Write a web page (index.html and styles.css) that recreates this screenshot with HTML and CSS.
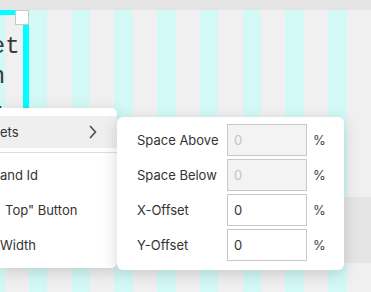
FILE: index.html
```html
<!DOCTYPE html>
<html>
<head>
<meta charset="utf-8">
<link rel="stylesheet" href="styles.css">
</head>
<body>
<div class="topbar"></div>
<div class="canvas">
  <div class="col-sel">
    <span class="handle"></span>
    <p class="col-text">amet<br>lon<br>ma-</p>
  </div>
  <div class="band"></div>
  <div class="popups">
    <div class="menu">
      <div class="menu-row active"><span>ets</span>
        <svg class="chev" width="8" height="14" viewBox="0 0 8 14"><path d="M1.5 1.5 L6.5 7 L1.5 12.5" fill="none" stroke="#555" stroke-width="1.8" stroke-linecap="round" stroke-linejoin="round"/></svg>
      </div>
      <div class="sep"></div>
      <div class="menu-row"><span>and Id</span></div>
      <div class="menu-row"><span class="indent">Top" Button</span></div>
      <div class="menu-row"><span>Width</span></div>
    </div>
    <div class="submenu">
      <label class="lbl">Space Above</label>
      <input class="field" type="text" value="0" disabled>
      <span class="unit">%</span>
      <label class="lbl">Space Below</label>
      <input class="field" type="text" value="0" disabled>
      <span class="unit">%</span>
      <label class="lbl">X-Offset</label>
      <input class="field" type="text" value="0">
      <span class="unit">%</span>
      <label class="lbl">Y-Offset</label>
      <input class="field" type="text" value="0">
      <span class="unit">%</span>
    </div>
  </div>
</div>
</body>
</html>
```
FILE: styles.css
```css
html, body {
  margin: 0;
  padding: 0;
}
body {
  width: 371px;
  height: 292px;
  overflow: hidden;
  background: #f0f0f0;
  font-family: Inter, "Noto Sans", sans-serif;
}
.topbar {
  height: 10px;
  background: #e4e4e4;
}
.canvas {
  position: relative;
  height: 282px;
  background: repeating-linear-gradient(90deg,
    #d3f9f7 0 4.75px,
    #f0f0f0 4.75px 29px,
    #d3f9f7 29px 42.75px);
}
.col-sel {
  position: relative;
  box-sizing: border-box;
  width: 100px;
  height: 160px;
  margin-left: -71px;
  border-top: 5px solid #00ffff;
  border-right: 6px solid #00ffff;
}
.handle {
  position: absolute;
  top: -5px;
  right: -6px;
  width: 12px;
  height: 13px;
  background: #fff;
  border: 1px solid #c8c8c8;
}
.col-text {
  margin: 0;
  padding-top: 17px;
  padding-left: 33px;
  font-family: "Liberation Mono", monospace;
  font-size: 24px;
  line-height: 30px;
  color: #3a3a3a;
}
.band {
  height: 66px;
  margin-top: 27px;
  background: #e5e5e5;
}
.popups {
  position: absolute;
  left: 0;
  top: 98px;
  display: flex;
  align-items: flex-start;
}
.menu {
  width: 117px;
  box-sizing: border-box;
  padding: 8px 0 6px;
  background: #fff;
  border-radius: 0 6px 6px 0;
  box-shadow: 0 4px 16px rgba(0,0,0,0.16);
  font-size: 13px;
  color: #333;
}
.menu-row {
  height: 35px;
  display: flex;
  align-items: center;
  justify-content: space-between;
  padding-right: 20px;
}
.menu-row.active {
  height: 32px;
  background: #efefef;
}
.indent {
  padding-left: 5px;
}
.chev {
  display: block;
}
.sep {
  height: 1px;
  margin: 4px 0 4px;
  background: #dcdcdc;
}
.submenu {
  margin-top: 9px;
  width: 227px;
  box-sizing: border-box;
  padding: 7px 20px 9px;
  background: #fff;
  border-radius: 6px;
  box-shadow: 0 4px 16px rgba(0,0,0,0.16);
  display: grid;
  grid-template-columns: 84px 80px auto;
  column-gap: 6px;
  row-gap: 3px;
  align-items: center;
  font-size: 13px;
  color: #333;
}
.lbl {
  white-space: nowrap;
}
.field {
  box-sizing: border-box;
  width: 80px;
  height: 32px;
  margin: 0;
  padding: 0 6px;
  border: 1px solid #c8c8c8;
  border-radius: 0;
  background: #fff;
  font-family: Inter, "Noto Sans", sans-serif;
  font-size: 13px;
  color: #333;
  outline: none;
}
.field:disabled {
  background: #f3f3f3;
  color: #c4c4c4;
}
.unit {
  color: #444;
}
```
